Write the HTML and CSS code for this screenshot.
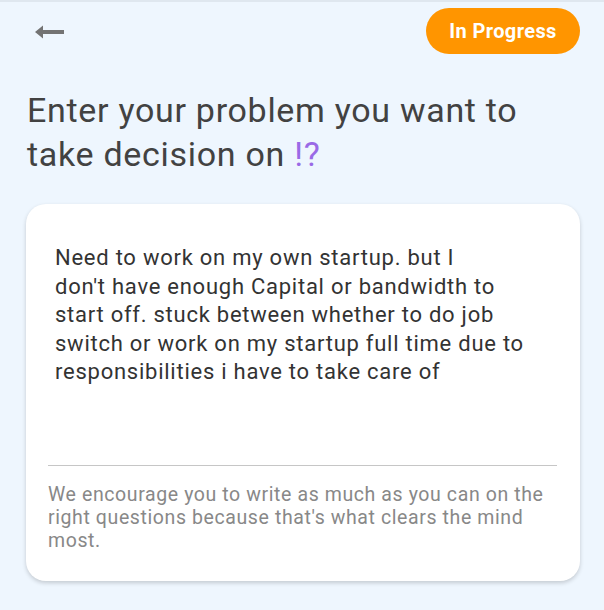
FILE: index.html
```html
<!DOCTYPE html>
<html>
<head>
<meta charset="utf-8">
<link rel="stylesheet" href="styles.css">
</head>
<body>
<div class="screen">
  <header class="topbar">
    <button class="back" aria-label="Back">
      <svg width="30" height="14" viewBox="0 0 30 14"><path d="M0 7 L8 0.5 L8 5 L29 5 L29 9 L8 9 L8 13.5 Z" fill="#737373"/></svg>
    </button>
    <span class="badge">In Progress</span>
  </header>
  <h1 class="title">Enter your problem you want to take decision on <span class="accent">!?</span></h1>
  <section class="card">
    <p class="entry">Need to work on my own startup. but I<br>don't have enough Capital or bandwidth to start off. stuck between whether to do job switch or work on my startup full time due to responsibilities i have to take care of</p>
    <hr class="divider">
    <p class="hint">We encourage you to write as much as you can on the right questions because that's what clears the mind most.</p>
  </section>
</div>
</body>
</html>
```

FILE: styles.css
```css
html, body {
  margin: 0;
  padding: 0;
}
body {
  background: #eef6fe;
  font-family: Roboto, "Noto Sans", sans-serif;
  width: 604px;
  height: 610px;
  overflow: hidden;
}
.screen {
  border-top: 2px solid #dfe7ef;
  padding: 0 24px 0 26px;
}
.topbar {
  display: flex;
  justify-content: space-between;
  align-items: center;
  padding-top: 6px;
  height: 46px;
}
.back {
  border: 0;
  background: none;
  padding: 0;
  margin-left: 9px;
  margin-top: 2px;
  display: flex;
}
.badge {
  background: #ff9500;
  color: #fff;
  font-weight: 700;
  font-size: 20px;
  letter-spacing: 0.4px;
  height: 46px;
  width: 154px;
  border-radius: 23px;
  display: flex;
  align-items: center;
  justify-content: center;
}
.title {
  margin: 35px 0 0 1px;
  font-weight: 400;
  font-size: 34px;
  letter-spacing: 0.7px;
  line-height: 43.5px;
  color: #424242;
  width: 530px;
}
.accent {
  color: #9a6ae6;
}
.card {
  margin-top: 28px;
  background: #fff;
  border-radius: 20px;
  box-shadow: 0 2px 4px rgba(0,0,0,0.18);
  padding: 40px 23px 0 22px;
  height: 377px;
  box-sizing: border-box;
}
.entry {
  margin: 0 10px 0 7px;
  font-size: 22px;
  letter-spacing: 0.75px;
  line-height: 28.5px;
  color: #333333;
}
.divider {
  border: 0;
  border-top: 1px solid #c6c6c6;
  margin: 78px 0 0 0;
}
.hint {
  margin: 17px 0 0 0;
  font-size: 19.5px;
  letter-spacing: 0.6px;
  line-height: 23.3px;
  color: #888888;
}
```
